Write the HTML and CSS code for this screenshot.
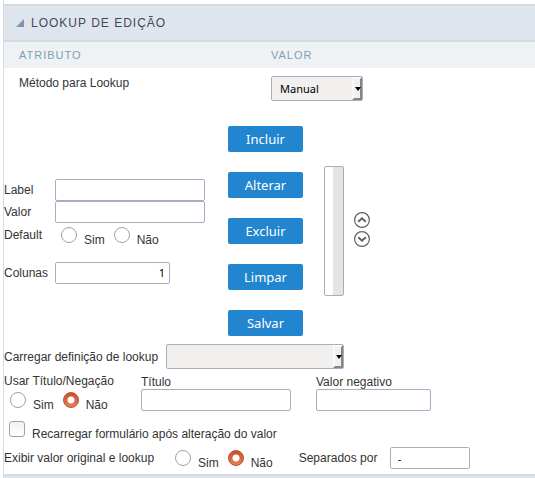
FILE: index.html
```html
<!DOCTYPE html>
<html lang="pt-BR">
<head>
<meta charset="UTF-8">
<meta name="viewport" content="width=device-width, initial-scale=1.0">
<title>Lookup de Edição</title>
<link rel="stylesheet" href="styles.css">
</head>
<body>
<form class="panel">
    <h2 class="panel-title">
        <svg class="toggle" width="8" height="8" viewBox="0 0 8 8"><path d="M8 0V8H0Z" fill="#8593a8"/></svg>
        Lookup de Edição
    </h2>
    <div class="columns">
        <span>Atributo</span>
        <span>Valor</span>
    </div>
    <div class="attribute">
        <label for="metodo">Método para Lookup</label>
        <span class="select-box">
            <select class="select method" id="metodo">
                <option>Manual</option>
                <option>Automático</option>
            </select>
        </span>
    </div>

    <div class="editor">
        <div class="fields">
            <label for="label">Label</label>
            <input class="text" type="text" id="label">
            <label for="valor">Valor</label>
            <input class="text" type="text" id="valor">
            <span class="default-label">Default</span>
            <div class="radios default-radios">
                <label class="option"><input class="radio" type="radio" name="default"> Sim</label>
                <label class="option"><input class="radio" type="radio" name="default"> Não</label>
            </div>
            <label for="colunas">Colunas</label>
            <input class="text short number" type="text" id="colunas" value="1">
        </div>
        <div class="buttons">
            <button class="btn" type="button">Incluir</button>
            <button class="btn" type="button">Alterar</button>
            <button class="btn" type="button">Excluir</button>
            <button class="btn" type="button">Limpar</button>
            <button class="btn" type="button">Salvar</button>
        </div>
        <select class="list" size="8" aria-label="Itens"></select>
        <div class="order">
            <button class="move" type="button" aria-label="Subir">
                <svg width="16" height="16" viewBox="0 0 16 16" fill="none" stroke="#606060"><circle cx="8" cy="8" r="7.4" stroke-width="1.2"/><path d="M4.2 9.8L8 6.2L11.8 9.8" stroke-width="1.9"/></svg>
            </button>
            <button class="move" type="button" aria-label="Descer">
                <svg width="16" height="16" viewBox="0 0 16 16" fill="none" stroke="#606060"><circle cx="8" cy="8" r="7.4" stroke-width="1.2"/><path d="M4.2 6.2L8 9.8L11.8 6.2" stroke-width="1.9"/></svg>
            </button>
        </div>
    </div>

    <div class="row load">
        <label class="load-label" for="carregar">Carregar definição de lookup</label>
        <span class="select-box">
            <select class="select definition" id="carregar">
                <option></option>
            </select>
        </span>
    </div>

    <div class="titles">
        <div class="use-title">
            <span>Usar Título/Negação</span>
            <div class="radios">
                <label class="option"><input class="radio" type="radio" name="usar"> Sim</label>
                <label class="option"><input class="radio" type="radio" name="usar" checked> Não</label>
            </div>
        </div>
        <div class="field">
            <label for="titulo">Título</label>
            <input class="text" type="text" id="titulo">
        </div>
        <div class="field">
            <label for="negativo">Valor negativo</label>
            <input class="text short" type="text" id="negativo">
        </div>
    </div>

    <label class="option reload"><input class="check" type="checkbox"> Recarregar formulário após alteração do valor</label>

    <div class="row original">
        <span class="original-label">Exibir valor original e lookup</span>
        <div class="radios original-radios">
            <label class="option"><input class="radio" type="radio" name="exibir"> Sim</label>
            <label class="option"><input class="radio" type="radio" name="exibir" checked> Não</label>
        </div>
        <label class="separator" for="separados">Separados por</label>
        <input class="text tiny" type="text" id="separados" value="-">
    </div>
    <div class="panel-end"></div>
</form>
</body>
</html>
```

FILE: styles.css
```css
*,
*::before,
*::after {
    box-sizing: border-box;
}

body {
    margin: 0;
    background-color: #fff;
    color: #333;
    font-family: "Liberation Sans", Arial, sans-serif;
    font-size: 12px;
    line-height: 14px;
}

.panel {
    margin: 0 0 0 3px;
    padding-top: 4px;
    border-left: 1px solid #d3dce3;
}

.panel-title {
    display: flex;
    align-items: center;
    gap: 7px;
    height: 38px;
    margin: 0;
    padding-left: 12px;
    border-top: 2px solid #d3dce3;
    border-bottom: 2px solid #d3dce3;
    background-color: #dfe5ed;
    color: #42485f;
    font-size: 12px;
    font-weight: normal;
    letter-spacing: 1px;
    text-transform: uppercase;
}

.columns,
.attribute {
    display: grid;
    grid-template-columns: 252px 1fr;
    padding-left: 15px;
}

.columns {
    align-items: center;
    height: 26px;
    background-color: #eff2f5;
    color: #7b9fb3;
    font-size: 11px;
    letter-spacing: 1px;
    text-transform: uppercase;
}

.attribute {
    padding-top: 8px;
}

/* drop-downs */
.select-box {
    position: relative;
    display: inline-block;
    justify-self: start;
}

.select-box::before {
    content: "";
    position: absolute;
    top: 1px;
    right: 1px;
    width: 10px;
    height: 23px;
    border: 2px solid;
    border-color: #fafafa #858585 #858585 #fafafa;
    background-color: #f1f0ee;
    pointer-events: none;
}

.select-box::after {
    content: "";
    position: absolute;
    top: 11px;
    right: 2px;
    border: 3px solid transparent;
    border-top: 4px solid #000;
    border-bottom: 0;
    pointer-events: none;
}

.select {
    display: block;
    height: 25px;
    padding: 0 8px;
    border: 1px solid #a5afbf;
    border-radius: 2px;
    background-color: #f1f0ee;
    color: #000;
    font-family: "Noto Sans", sans-serif;
    font-size: 11px;
    appearance: none;
}

.method {
    width: 92px;
}

.definition {
    width: 178px;
}

/* item editor */
.editor {
    display: flex;
    align-items: center;
    margin-top: 25px;
}

.fields {
    display: grid;
    grid-template-columns: 51px 150px;
    align-items: center;
}

.text {
    width: 150px;
    height: 22px;
    padding: 0 6px;
    border: 1px solid #a5afbf;
    border-radius: 2px;
    background-color: #fff;
    color: #000;
    font-family: "Noto Sans", sans-serif;
    font-size: 11px;
}

.short {
    width: 115px;
}

.tiny {
    width: 80px;
}

.number {
    padding-right: 4px;
    text-align: right;
}

.default-label {
    align-self: start;
    padding-top: 5px;
}

.default-radios {
    height: 39px;
    padding-top: 4px;
}

.buttons {
    display: flex;
    flex-direction: column;
    gap: 20px;
    margin-left: 23px;
}

.btn {
    width: 75px;
    height: 26px;
    padding: 0;
    border: none;
    border-radius: 2px;
    background-color: #2185d0;
    color: #fff;
    font-family: "Noto Sans", sans-serif;
    font-size: 13px;
    cursor: pointer;
}

.btn:hover {
    background-color: #1a6fb0;
}

.list {
    width: 20px;
    height: 130px;
    margin-left: 21px;
    padding: 0;
    border: 1px solid #a5afbf;
    border-radius: 2px;
    background: linear-gradient(to right, #fff 8px, #e4e4e4 8px);
    overflow: hidden;
}

.order {
    display: flex;
    flex-direction: column;
    gap: 3px;
    margin-left: 10px;
    padding-bottom: 4px;
}

.move {
    width: 16px;
    height: 16px;
    padding: 0;
    border: none;
    background: none;
    cursor: pointer;
}

.move svg {
    display: block;
}

/* radios and tick box */
.radios {
    display: flex;
    align-items: flex-start;
    gap: 9px;
    padding-left: 6px;
}

.option {
    display: flex;
    align-items: flex-start;
    gap: 7px;
    height: 20px;
    line-height: 26px;
}

.radio,
.check {
    flex: none;
    width: 16px;
    height: 16px;
    margin: 0;
    border: 1px solid #a3a3a3;
    background-color: #fff;
    appearance: none;
}

.radio {
    border-radius: 50%;
}

.radio:checked {
    border-color: #b5502f;
    background: radial-gradient(circle, #fff 3px, transparent 4px), linear-gradient(#cb4b20, #e8835e);
    background-origin: border-box;
}

.check {
    border-radius: 3px;
    background-image: linear-gradient(#f1f1f1, #fff);
}

.check:checked {
    background-image: linear-gradient(#cb4b20, #e8835e);
}

/* lower rows */
.row {
    display: flex;
    align-items: center;
}

.load {
    margin-top: 8px;
}

.load-label {
    width: 162px;
}

.titles {
    display: flex;
    margin-top: 5px;
}

.use-title {
    width: 137px;
}

.use-title .radios {
    margin-top: 4px;
}

.field {
    display: flex;
    flex-direction: column;
    margin-right: 25px;
    padding-top: 1px;
}

.reload {
    margin-top: 9px;
    padding-left: 5px;
}

.original {
    margin-top: 6px;
}

.original-label {
    width: 165px;
}

.original-radios {
    align-self: flex-end;
    height: 20px;
    padding-top: 1px;
}

.separator {
    width: 91px;
    margin-left: 26px;
}

.tiny {
    padding-left: 7px;
}

.panel-end {
    height: 4px;
    margin-top: 5px;
    border-top: 2px solid #d3dce3;
    background-color: #dfe5ed;
}
```
